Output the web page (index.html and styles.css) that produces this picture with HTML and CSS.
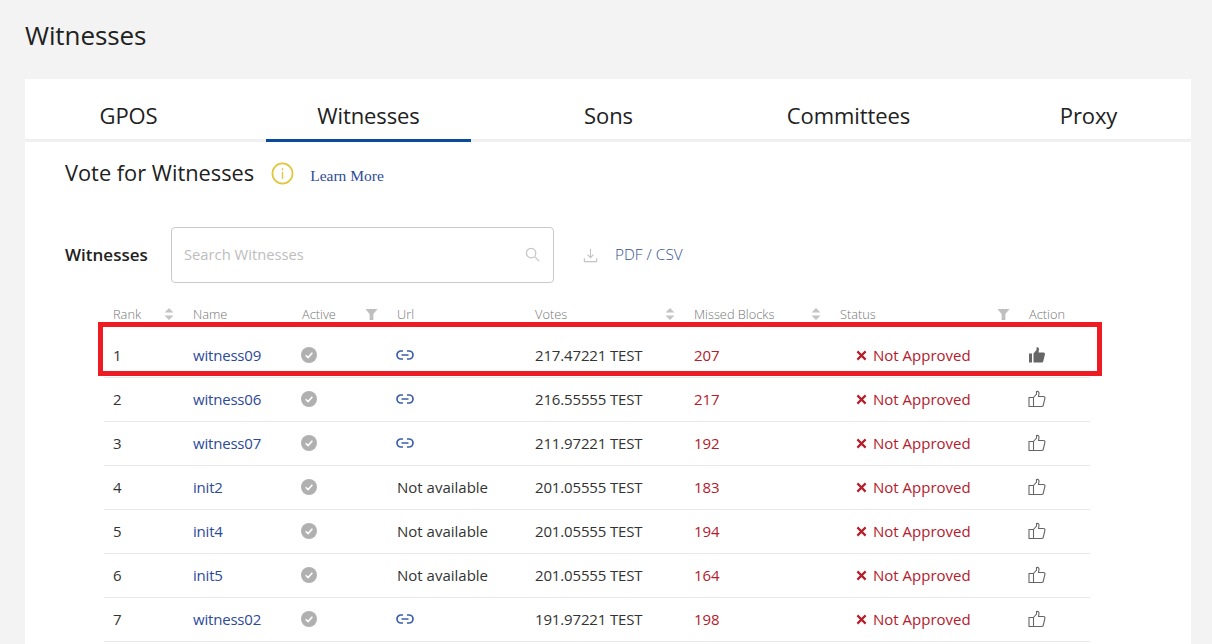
FILE: index.html
```html
<!DOCTYPE html>
<html lang="en">
<head>
    <meta charset="UTF-8">
    <meta name="viewport" content="width=device-width, initial-scale=1.0">
    <title>Witnesses</title>
    <link rel="stylesheet" href="styles.css">
</head>
<body>
    <svg class="icon-defs" width="0" height="0" aria-hidden="true">
        <symbol id="sort" viewBox="0 0 10 14"><path d="M5 1 9.500 5.500H.5zM5 13 .5 8.500h9z" fill="#c4c4c4"/></symbol>
        <symbol id="filter" viewBox="0 0 14 14"><path d="M.5 1h13L9 6.500V13H5V6.500z" fill="#bfbfbf"/></symbol>
        <symbol id="check" viewBox="0 0 16 16"><circle cx="8" cy="8" r="8" fill="#b0b0b0"/><path d="M4.700 8.200 7.100 10.600 11.400 5.800" fill="none" stroke="#fff" stroke-width="1.600"/></symbol>
        <symbol id="link" viewBox="0 0 18 10"><path d="M7 1H5a4 4 0 0 0 0 8h2M11 1h2a4 4 0 0 1 0 8h-2M5.500 5h7" fill="none" stroke="#3b5ea8" stroke-width="1.700"/></symbol>
        <symbol id="cross" viewBox="0 0 12 12"><path d="M1.500 1.500 10.500 10.500M10.500 1.500 1.500 10.500" stroke="#b3202c" stroke-width="2.400"/></symbol>
        <symbol id="thumb" viewBox="0 0 18 18"><path d="M5.500 7.500 8.500 4V1.500c1.600-.6 2.700.5 2.500 2L10.500 6.500H15.500c1 0 1.700.9 1.400 1.900L15.200 15.500c-.2.700-.8 1-1.400 1H5.500zM1 7.500H5.500V16.500H1z" fill="none" stroke="#666" stroke-width="1.100"/></symbol>
        <symbol id="thumb-on" viewBox="0 0 18 18"><path d="M5.500 7.500 8.500 4V1.500c1.600-.6 2.700.5 2.500 2L10.500 6.500H15.500c1 0 1.700.9 1.400 1.900L15.200 15.500c-.2.700-.8 1-1.400 1H5.500z" fill="#666"/><path d="M1 7.500H4V16.500H1z" fill="#666"/></symbol>
    </svg>

    <h1 class="page-title">Witnesses</h1>

    <div class="card">
        <div class="tabs">
            <div class="tab">GPOS</div>
            <div class="tab tab-active">Witnesses</div>
            <div class="tab">Sons</div>
            <div class="tab">Committees</div>
            <div class="tab">Proxy</div>
        </div>

        <div class="panel">
            <div class="vote-head">
                <h2>Vote for Witnesses</h2>
                <svg class="info-icon" viewBox="0 0 24 24"><circle cx="12" cy="12" r="10.500" fill="none" stroke="#e3c63f" stroke-width="1.800"/><path d="M12 6.500v2M12 10.500v7" stroke="#e3c63f" stroke-width="1.500"/></svg>
                <a class="learn-more">Learn More</a>
            </div>

            <div class="search-row">
                <span class="search-label">Witnesses</span>
                <div class="search-box">
                    <span>Search Witnesses</span>
                    <svg class="search-icon" viewBox="0 0 16 16"><circle cx="6.500" cy="6.500" r="5" fill="none" stroke="#c4c4c4" stroke-width="1.300"/><path d="M10.300 10.300 15 15" stroke="#c4c4c4" stroke-width="1.300"/></svg>
                </div>
                <svg class="download-icon" viewBox="0 0 16 16"><path d="M8 1v9M4.800 7 8 10.300 11.200 7M1.500 11v3.500h13V11" fill="none" stroke="#c4c4c4" stroke-width="1.200"/></svg>
                <a class="export">PDF / CSV</a>
            </div>

            <table class="witness-table">
                <thead>
                    <tr>
                        <th class="col-rank"><div class="th-in">Rank<svg class="sort"><use href="#sort"/></svg></div></th>
                        <th class="col-name">Name</th>
                        <th class="col-active"><div class="th-in">Active<svg class="filter"><use href="#filter"/></svg></div></th>
                        <th class="col-url">Url</th>
                        <th class="col-votes"><div class="th-in">Votes<svg class="sort"><use href="#sort"/></svg></div></th>
                        <th class="col-missed"><div class="th-in">Missed Blocks<svg class="sort"><use href="#sort"/></svg></div></th>
                        <th class="col-status"><div class="th-in">Status<svg class="filter"><use href="#filter"/></svg></div></th>
                        <th class="col-action">Action</th>
                    </tr>
                </thead>
                <tbody>
                    <tr class="row-marked">
                        <td>1</td><td class="name">witness09</td><td><svg class="check"><use href="#check"/></svg></td>
                        <td><svg class="link"><use href="#link"/></svg></td><td class="votes">217.47221 TEST</td><td class="missed">207</td>
                        <td class="status"><svg class="cross"><use href="#cross"/></svg>Not Approved</td><td class="action-cell"><svg class="thumb"><use href="#thumb-on"/></svg><div class="mark-box"></div></td>
                    </tr>
                    <tr>
                        <td>2</td><td class="name">witness06</td><td><svg class="check"><use href="#check"/></svg></td>
                        <td><svg class="link"><use href="#link"/></svg></td><td class="votes">216.55555 TEST</td><td class="missed">217</td>
                        <td class="status"><svg class="cross"><use href="#cross"/></svg>Not Approved</td><td><svg class="thumb"><use href="#thumb"/></svg></td>
                    </tr>
                    <tr>
                        <td>3</td><td class="name">witness07</td><td><svg class="check"><use href="#check"/></svg></td>
                        <td><svg class="link"><use href="#link"/></svg></td><td class="votes">211.97221 TEST</td><td class="missed">192</td>
                        <td class="status"><svg class="cross"><use href="#cross"/></svg>Not Approved</td><td><svg class="thumb"><use href="#thumb"/></svg></td>
                    </tr>
                    <tr>
                        <td>4</td><td class="name">init2</td><td><svg class="check"><use href="#check"/></svg></td>
                        <td>Not available</td><td class="votes">201.05555 TEST</td><td class="missed">183</td>
                        <td class="status"><svg class="cross"><use href="#cross"/></svg>Not Approved</td><td><svg class="thumb"><use href="#thumb"/></svg></td>
                    </tr>
                    <tr>
                        <td>5</td><td class="name">init4</td><td><svg class="check"><use href="#check"/></svg></td>
                        <td>Not available</td><td class="votes">201.05555 TEST</td><td class="missed">194</td>
                        <td class="status"><svg class="cross"><use href="#cross"/></svg>Not Approved</td><td><svg class="thumb"><use href="#thumb"/></svg></td>
                    </tr>
                    <tr>
                        <td>6</td><td class="name">init5</td><td><svg class="check"><use href="#check"/></svg></td>
                        <td>Not available</td><td class="votes">201.05555 TEST</td><td class="missed">164</td>
                        <td class="status"><svg class="cross"><use href="#cross"/></svg>Not Approved</td><td><svg class="thumb"><use href="#thumb"/></svg></td>
                    </tr>
                    <tr>
                        <td>7</td><td class="name">witness02</td><td><svg class="check"><use href="#check"/></svg></td>
                        <td><svg class="link"><use href="#link"/></svg></td><td class="votes">191.97221 TEST</td><td class="missed">198</td>
                        <td class="status"><svg class="cross"><use href="#cross"/></svg>Not Approved</td><td><svg class="thumb"><use href="#thumb"/></svg></td>
                    </tr>
                </tbody>
            </table>
        </div>
    </div>
</body>
</html>
```

FILE: styles.css
```css
html, body {
    height: 644px;
    overflow: hidden;
}
body {
    margin: 0;
    padding: 0 21px 0 25px;
    background-color: #f3f3f3;
    font-family: "Open Sans", "Noto Sans", sans-serif;
    color: #212121;
}
.icon-defs {
    position: absolute;
}
.page-title {
    margin: 0;
    padding-top: 18px;
    height: 79px;
    box-sizing: border-box;
    font-size: 26px;
    line-height: 34px;
    font-weight: 500;
    letter-spacing: -0.1px;
}
.card {
    background-color: #fff;
    height: 565px;
    overflow: hidden;
}
.tabs {
    display: flex;
    gap: 35px;
    height: 60px;
    padding-left: 1px;
    border-bottom: 3px solid #f0f0f0;
}
.tab {
    width: 205px;
    height: 60px;
    padding-top: 19px;
    box-sizing: border-box;
    text-align: center;
    font-size: 22px;
    line-height: 34px;
    font-weight: 500;
    letter-spacing: -0.1px;
}
.tab-active {
    height: 63px;
    border-bottom: 3px solid #0a4a9a;
}
.panel {
    padding: 0 101px 0 40px;
}
.vote-head {
    display: flex;
    align-items: center;
    height: 62px;
}
.vote-head h2 {
    margin: -2px 0 0;
    font-size: 21.800px;
    font-weight: 500;
}
.info-icon {
    width: 23px;
    height: 23px;
    margin-left: 17px;
}
.learn-more {
    margin: 6px 0 0 16px;
    font-family: "Liberation Serif", serif;
    font-size: 15.500px;
    color: #2c4a9a;
}
.search-row {
    display: flex;
    align-items: center;
    margin-top: 23px;
    height: 56px;
}
.search-label {
    width: 106px;
    padding-bottom: 2px;
    font-size: 17px;
    font-weight: 600;
}
.search-box {
    display: flex;
    align-items: center;
    justify-content: space-between;
    width: 383px;
    height: 56px;
    padding: 0 13px 2px 12px;
    box-sizing: border-box;
    border: 1px solid #c9c9c9;
    border-radius: 4px;
    font-size: 14.750px;
    color: #bdbdbd;
}
.search-icon {
    width: 15px;
    height: 15px;
}
.download-icon {
    width: 15px;
    height: 15px;
    margin-left: 29px;
}
.export {
    margin-left: 17px;
    padding-bottom: 2px;
    font-size: 15.400px;
    font-weight: 300;
    color: #34508f;
}
.witness-table {
    margin: 12px 0 0 39px;
    width: 986px;
    table-layout: fixed;
    border-collapse: collapse;
}
.witness-table th {
    height: 38px;
    padding: 0 10px 0 9px;
    box-sizing: border-box;
    text-align: left;
    font-size: 12.800px;
    font-weight: 300;
    color: #777;
}
.th-in {
    display: flex;
    align-items: center;
    justify-content: space-between;
}
.col-rank { width: 80px; }
.col-name { width: 109px; }
.col-active { width: 95px; }
.col-url { width: 138px; }
.col-votes { width: 159px; }
.col-missed { width: 146px; }
.col-status { width: 189px; }
.col-action { width: 70px; }
.witness-table td {
    height: 44px;
    padding: 0 9px;
    box-sizing: border-box;
    font-size: 15px;
    border-bottom: 1px solid #e9e9e9;
    color: #333;
}
.witness-table svg {
    display: block;
}
.sort {
    width: 10px;
    height: 14px;
}
.filter {
    width: 13px;
    height: 13px;
}
.check {
    width: 16px;
    height: 16px;
    margin-left: -1px;
}
.link {
    width: 18px;
    height: 10px;
    margin-left: -1px;
}
.thumb {
    width: 18px;
    height: 18px;
    margin-left: -1px;
}
.witness-table td.name {
    color: #2c4a9a;
    letter-spacing: -0.2px;
}
.witness-table td.votes {
    letter-spacing: -0.15px;
}
.witness-table td.missed {
    color: #b3202c;
    letter-spacing: -0.1px;
}
.witness-table td.status {
    padding-left: 25px;
    color: #b3202c;
    white-space: nowrap;
}
.witness-table .cross {
    display: inline-block;
    width: 11px;
    height: 11px;
    margin-right: 6px;
}
.action-cell {
    position: relative;
}
/* red marker drawn over the first row */
.mark-box {
    position: absolute;
    top: -11px;
    right: -12px;
    width: 1004px;
    height: 54px;
    box-sizing: border-box;
    border: 5px solid #ed1c24;
}
```
